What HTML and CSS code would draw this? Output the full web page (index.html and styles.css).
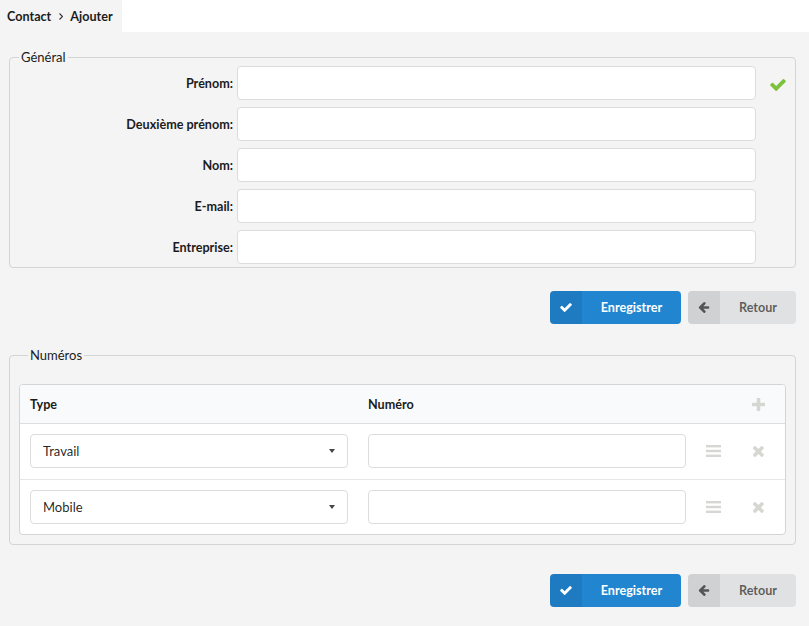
FILE: index.html
```html
<!DOCTYPE html>
<html lang="fr">
<head>
<meta charset="utf-8">
<title>Contact - Ajouter</title>
<link rel="stylesheet" href="styles.css">
</head>
<body>
<header class="topbar">
  <nav class="crumbs">
    <span class="crumb">Contact</span>
    <svg class="crumb-sep" viewBox="0 0 4 7" width="4" height="7"><polyline points="0.5,0.5 3.5,3.5 0.5,6.5" fill="none" stroke="#333" stroke-width="1.1"/></svg>
    <span class="crumb">Ajouter</span>
  </nav>
</header>
<main class="page">
  <fieldset class="group">
    <legend>Général</legend>
    <div class="form-grid">
      <label class="form-label">Prénom:</label>
      <input class="field" type="text">
      <span class="valid-icon"><svg viewBox="121 334 1550 1188" width="16" height="12"><path fill="#7cc23e" d="M1671 566q0 40-28 68l-724 724-136 136q-28 28-68 28t-68-28l-136-136-362-362q-28-28-28-68t28-68l136-136q28-28 68-28t68 28l294 295 656-657q28-28 68-28t68 28l136 136q28 28 28 68z"/></svg></span>

      <label class="form-label">Deuxième prénom:</label>
      <input class="field" type="text">
      <span></span>

      <label class="form-label">Nom:</label>
      <input class="field" type="text">
      <span></span>

      <label class="form-label">E-mail:</label>
      <input class="field" type="text">
      <span></span>

      <label class="form-label">Entreprise:</label>
      <input class="field" type="text">
      <span></span>
    </div>
  </fieldset>

  <div class="actions">
    <button class="btn btn-primary" type="button">
      <span class="btn-icon"><svg viewBox="121 334 1550 1188" width="12" height="9"><path fill="#fff" d="M1671 566q0 40-28 68l-724 724-136 136q-28 28-68 28t-68-28l-136-136-362-362q-28-28-28-68t28-68l136-136q28-28 68-28t68 28l294 295 656-657q28-28 68-28t68 28l136 136q28 28 28 68z"/></svg></span>
      <span class="btn-text">Enregistrer</span>
    </button>
    <button class="btn btn-default" type="button">
      <span class="btn-icon"><svg viewBox="192 181 1472 1558" width="12" height="11"><path fill="#555" d="M1664 896v128q0 53-32.5 90.5t-84.5 37.5h-704l293 294q38 36 38 90t-38 90l-75 76q-37 37-90 37-52 0-91-37l-651-652q-37-37-37-90 0-52 37-91l651-650q38-38 91-38 52 0 90 38l75 74q38 38 38 91t-38 91l-293 293h704q52 0 84.5 37.5t32.5 90.5z"/></svg></span>
      <span class="btn-text">Retour</span>
    </button>
  </div>

  <fieldset class="group group-numbers">
    <legend>Numéros</legend>
    <div class="numbers-table">
      <div class="trow thead">
        <div class="cell">Type</div>
        <div class="cell">Numéro</div>
        <div class="cell"></div>
        <div class="cell cell-icon">
          <svg viewBox="0 192 1408 1408" width="13" height="13"><path fill="#d6d6d2" d="M1408 800v192q0 40-28 68t-68 28h-416v416q0 40-28 68t-68 28h-192q-40 0-68-28t-28-68v-416h-416q-40 0-68-28t-28-68v-192q0-40 28-68t68-28h416v-416q0-40 28-68t68-28h192q40 0 68 28t28 68v416h416q40 0 68 28t28 68z"/></svg>
        </div>
      </div>
      <div class="trow tbody">
        <div class="cell"><div class="select"><span>Travail</span><span class="caret"></span></div></div>
        <div class="cell"><input class="field" type="text"></div>
        <div class="cell cell-icon">
          <svg viewBox="0 0 15 12" width="15" height="12"><rect x="0" y="0" width="15" height="2.4" fill="#d6d6d2"/><rect x="0" y="4.8" width="15" height="2.4" fill="#d6d6d2"/><rect x="0" y="9.6" width="15" height="2.4" fill="#d6d6d2"/></svg>
        </div>
        <div class="cell cell-icon">
          <svg viewBox="218 262 1272 1292" width="12" height="12"><path fill="#d6d6d2" d="M1490 1322q0 40-28 68l-136 136q-28 28-68 28t-68-28l-294-294-294 294q-28 28-68 28t-68-28l-136-136q-28-28-28-68t28-68l294-294-294-294q-28-28-28-68t28-68l136-136q28-28 68-28t68 28l294 294 294-294q28-28 68-28t68 28l136 136q28 28 28 68t-28 68l-294 294 294 294q28 28 28 68z"/></svg>
        </div>
      </div>
      <div class="trow tbody">
        <div class="cell"><div class="select"><span>Mobile</span><span class="caret"></span></div></div>
        <div class="cell"><input class="field" type="text"></div>
        <div class="cell cell-icon">
          <svg viewBox="0 0 15 12" width="15" height="12"><rect x="0" y="0" width="15" height="2.4" fill="#d6d6d2"/><rect x="0" y="4.8" width="15" height="2.4" fill="#d6d6d2"/><rect x="0" y="9.6" width="15" height="2.4" fill="#d6d6d2"/></svg>
        </div>
        <div class="cell cell-icon">
          <svg viewBox="218 262 1272 1292" width="12" height="12"><path fill="#d6d6d2" d="M1490 1322q0 40-28 68l-136 136q-28 28-68 28t-68-28l-294-294-294 294q-28 28-68 28t-68-28l-136-136q-28-28-28-68t28-68l294-294-294-294q-28-28-28-68t28-68l136-136q28-28 68-28t68 28l294 294 294-294q28-28 68-28t68 28l136 136q28 28 28 68t-28 68l-294 294 294 294q28 28 28 68z"/></svg>
        </div>
      </div>
    </div>
  </fieldset>

  <div class="actions actions-bottom">
    <button class="btn btn-primary" type="button">
      <span class="btn-icon"><svg viewBox="121 334 1550 1188" width="12" height="9"><path fill="#fff" d="M1671 566q0 40-28 68l-724 724-136 136q-28 28-68 28t-68-28l-136-136-362-362q-28-28-28-68t28-68l136-136q28-28 68-28t68 28l294 295 656-657q28-28 68-28t68 28l136 136q28 28 28 68z"/></svg></span>
      <span class="btn-text">Enregistrer</span>
    </button>
    <button class="btn btn-default" type="button">
      <span class="btn-icon"><svg viewBox="192 181 1472 1558" width="12" height="11"><path fill="#555" d="M1664 896v128q0 53-32.5 90.5t-84.5 37.5h-704l293 294q38 36 38 90t-38 90l-75 76q-37 37-90 37-52 0-91-37l-651-652q-37-37-37-90 0-52 37-91l651-650q38-38 91-38 52 0 90 38l75 74q38 38 38 91t-38 91l-293 293h704q52 0 84.5 37.5t32.5 90.5z"/></svg></span>
      <span class="btn-text">Retour</span>
    </button>
  </div>
</main>
</body>
</html>
```

FILE: styles.css
```css
* {
  box-sizing: border-box;
}

body {
  margin: 0;
  background: #f4f4f4;
  font-family: Lato, "Noto Sans", sans-serif;
  font-size: 13px;
  color: #1b1c1d;
}

.topbar {
  display: flex;
  height: 32px;
  background: #fff;
}

.crumbs {
  display: flex;
  align-items: center;
  background: #f4f4f4;
  padding: 0 9px 0 7px;
  font-size: 12.6px;
  font-weight: 700;
}

.crumb-sep {
  margin: 1px 7px 0 8px;
}

.page {
  padding: 17px 13px 0 9px;
}

.group {
  margin: 0;
  min-width: 0;
  border: 1px solid #d4d4d5;
  border-radius: 4px;
  padding: 1px 9px 3px;
}

.group legend {
  padding: 0 2px;
  line-height: 16px;
  font-size: 13px;
  font-weight: 400;
  color: #1b1c1d;
}

.form-grid {
  display: grid;
  grid-template-columns: 214px 519px 1fr;
  grid-auto-rows: 34px;
  column-gap: 4px;
  row-gap: 7px;
  align-items: center;
}

.form-label {
  text-align: right;
  font-size: 12.6px;
  font-weight: 700;
  color: #1b1c1d;
}

.field {
  display: block;
  width: 100%;
  height: 34px;
  margin: 0;
  border: 1px solid #dcdcdc;
  border-radius: 4px;
  background: #fff;
  font-family: inherit;
  font-size: 13px;
  outline: none;
}

.valid-icon {
  display: flex;
  align-items: center;
  margin-left: 10px;
  padding-top: 3px;
}

.actions {
  display: flex;
  justify-content: flex-end;
  gap: 7px;
  margin: 23px 0;
}

.actions-bottom {
  margin: 29px 0 0;
}

.btn {
  display: flex;
  height: 33px;
  padding: 0;
  border: 0;
  border-radius: 4px;
  overflow: hidden;
  font-family: inherit;
  font-size: 12.6px;
  font-weight: 700;
  cursor: pointer;
}

.btn-icon {
  width: 32px;
  display: flex;
  align-items: center;
  justify-content: center;
  background: rgba(0, 0, 0, 0.07);
}

.btn-text {
  flex: 1;
  display: flex;
  align-items: center;
  justify-content: center;
}

.btn-primary {
  width: 131px;
  background: #2185d0;
  color: #fff;
}

.btn-default {
  width: 108px;
  background: #e0e1e2;
  color: rgba(0, 0, 0, 0.6);
}

.group-numbers {
  padding: 21px 9px 9px;
}

.group-numbers legend {
  margin-left: 9px;
}

.numbers-table {
  background: #fff;
  border: 1px solid #d4d4d5;
  border-radius: 4px;
  overflow: hidden;
}

.trow {
  display: grid;
  grid-template-columns: 338px 338px 35px 1fr;
  align-items: center;
}

.thead {
  height: 39px;
  background: #f9fafb;
  border-bottom: 1px solid #dedede;
  font-size: 12.6px;
  font-weight: 700;
}

.tbody {
  height: 55px;
  padding-top: 10px;
  align-items: start;
}

.tbody .cell-icon {
  height: 34px;
}

.tbody + .tbody {
  border-top: 1px solid #e6e6e6;
}

.cell {
  padding: 0 10px;
}

.cell-icon {
  display: flex;
  justify-content: center;
  align-items: center;
  padding: 0;
}

.select {
  display: flex;
  align-items: center;
  justify-content: space-between;
  height: 34px;
  padding: 0 12px;
  border: 1px solid #dcdcdc;
  border-radius: 4px;
  background: #fff;
  color: rgba(0, 0, 0, 0.87);
}

.caret {
  width: 0;
  height: 0;
  border-left: 3px solid transparent;
  border-right: 3px solid transparent;
  border-top: 4px solid #444;
}
```
